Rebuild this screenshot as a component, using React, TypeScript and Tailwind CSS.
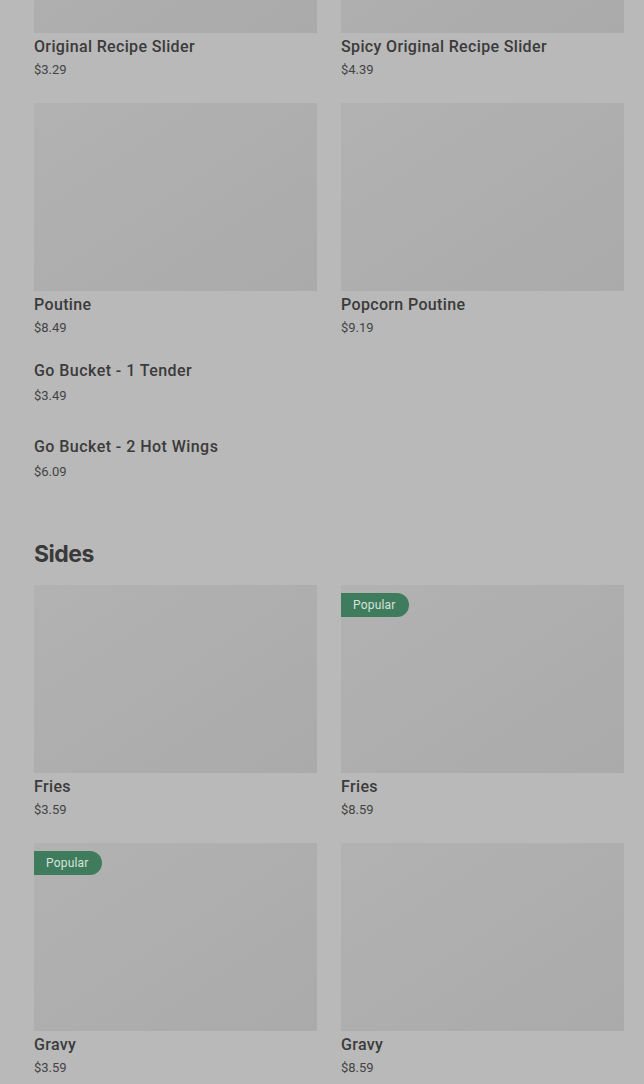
type Item = {
  name: string
  price: string
  popular?: boolean
}

const mains: Item[] = [
  { name: 'Original Recipe Slider', price: '$3.29' },
  { name: 'Spicy Original Recipe Slider', price: '$4.39' },
  { name: 'Poutine', price: '$8.49' },
  { name: 'Popcorn Poutine', price: '$9.19' },
]

const extras: Item[] = [
  { name: 'Go Bucket - 1 Tender', price: '$3.49' },
  { name: 'Go Bucket - 2 Hot Wings', price: '$6.09' },
]

const sides: Item[] = [
  { name: 'Fries', price: '$3.59' },
  { name: 'Fries', price: '$8.59', popular: true },
  { name: 'Gravy', price: '$3.59', popular: true },
  { name: 'Gravy', price: '$8.59' },
]

function Card({ item }: { item: Item }) {
  return (
    <div className="flex flex-col">
      <div className="relative h-[188px] w-full bg-gradient-to-br from-[#b2b2b2] to-[#aaaaaa]">
        {item.popular && (
          <span className="absolute left-0 top-[8px] flex h-[24px] items-center rounded-r-full bg-[#3f7c5d] pl-[12px] pr-[13px] text-[12px] tracking-[0.2px] text-[#d6e2dc]">
            Popular
          </span>
        )}
      </div>
      <div className="pt-[2px]">
        <p className="text-[16px] font-medium leading-[24px] tracking-[0.35px] text-[#3b3b3b]">{item.name}</p>
        <p className="text-[13px] leading-[22px] text-[#444444]">{item.price}</p>
      </div>
    </div>
  )
}

export default function App() {
  return (
    <div className="relative h-[1084px] w-full overflow-hidden bg-[#b9b9b9] font-['Roboto',sans-serif]">
      <div className="mt-[-155px] pl-[34px] pr-[20px]">
        <div className="grid grid-cols-2 gap-x-[24px] gap-y-[22px]">
          {mains.map((item, i) => (
            <Card key={i} item={item} />
          ))}
        </div>

        <div className="mt-[20px] flex flex-col gap-[28px]">
          {extras.map((item, i) => (
            <div key={i} className="flex flex-col gap-[2px]">
              <p className="text-[16px] font-medium leading-[24px] tracking-[0.45px] text-[#3b3b3b]">{item.name}</p>
              <p className="text-[13px] leading-[22px] text-[#444444]">{item.price}</p>
            </div>
          ))}
        </div>

        <h2 className="mt-[55px] font-['Inter',sans-serif] text-[23px] font-bold leading-[32px] tracking-[-0.5px] text-[#3a3a3a]">
          Sides
        </h2>

        <div className="mt-[15px] grid grid-cols-2 gap-x-[24px] gap-y-[22px]">
          {sides.map((item, i) => (
            <Card key={i} item={item} />
          ))}
        </div>
      </div>
    </div>
  )
}
